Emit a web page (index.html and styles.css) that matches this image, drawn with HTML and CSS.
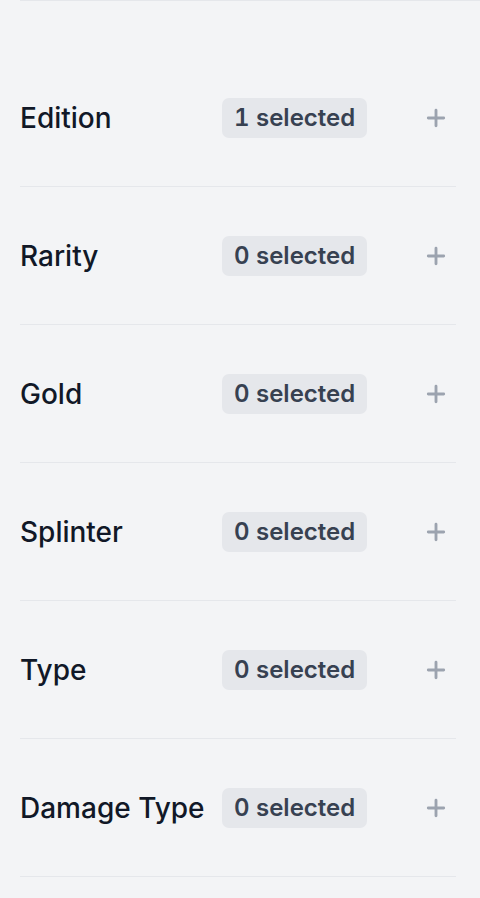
FILE: index.html
```html
<!DOCTYPE html>
<html>
<head>
<meta charset="utf-8">
<link rel="stylesheet" href="styles.css">
</head>
<body>
<div class="panel">
  <div class="topline"></div>
  <div class="filters">
    <div class="row"><span class="label">Edition</span><span class="badge">1 selected</span><span class="plus"><svg viewBox="0 0 20 20" width="22" height="22"><path d="M10 3v14M3 10h14" stroke="#9ca3af" stroke-width="2.6" stroke-linecap="round"/></svg></span></div>
    <div class="row"><span class="label">Rarity</span><span class="badge">0 selected</span><span class="plus"><svg viewBox="0 0 20 20" width="22" height="22"><path d="M10 3v14M3 10h14" stroke="#9ca3af" stroke-width="2.6" stroke-linecap="round"/></svg></span></div>
    <div class="row"><span class="label">Gold</span><span class="badge">0 selected</span><span class="plus"><svg viewBox="0 0 20 20" width="22" height="22"><path d="M10 3v14M3 10h14" stroke="#9ca3af" stroke-width="2.6" stroke-linecap="round"/></svg></span></div>
    <div class="row"><span class="label">Splinter</span><span class="badge">0 selected</span><span class="plus"><svg viewBox="0 0 20 20" width="22" height="22"><path d="M10 3v14M3 10h14" stroke="#9ca3af" stroke-width="2.6" stroke-linecap="round"/></svg></span></div>
    <div class="row"><span class="label">Type</span><span class="badge">0 selected</span><span class="plus"><svg viewBox="0 0 20 20" width="22" height="22"><path d="M10 3v14M3 10h14" stroke="#9ca3af" stroke-width="2.6" stroke-linecap="round"/></svg></span></div>
    <div class="row"><span class="label">Damage Type</span><span class="badge">0 selected</span><span class="plus"><svg viewBox="0 0 20 20" width="22" height="22"><path d="M10 3v14M3 10h14" stroke="#9ca3af" stroke-width="2.6" stroke-linecap="round"/></svg></span></div>
  </div>
</div>
</body>
</html>
```
FILE: styles.css
```css
html, body {
  margin: 0;
  padding: 0;
  background: #f3f4f6;
  font-family: Inter, "Noto Sans", sans-serif;
}
.panel {
  width: 480px;
  height: 898px;
  overflow: hidden;
}
.topline {
  margin-left: 20px;
  border-top: 1px solid #e5e7eb;
  height: 0;
}
.filters {
  padding: 48px 24px 0 20px;
}
.row {
  display: grid;
  grid-template-columns: 202px auto 1fr;
  align-items: center;
  height: 137px;
  border-bottom: 1px solid #e5e7eb;
}
.label {
  font-size: 28px;
  font-weight: 500;
  color: #111827;
}
.badge {
  display: inline-flex;
  align-items: center;
  height: 40px;
  padding: 0 12px;
  border-radius: 7px;
  background: #e5e7eb;
  color: #374151;
  font-size: 24px;
  font-weight: 600;
  font-variant-numeric: tabular-nums;
  box-sizing: border-box;
}
.plus {
  justify-self: end;
  display: flex;
  margin-right: 9px;
}
```
